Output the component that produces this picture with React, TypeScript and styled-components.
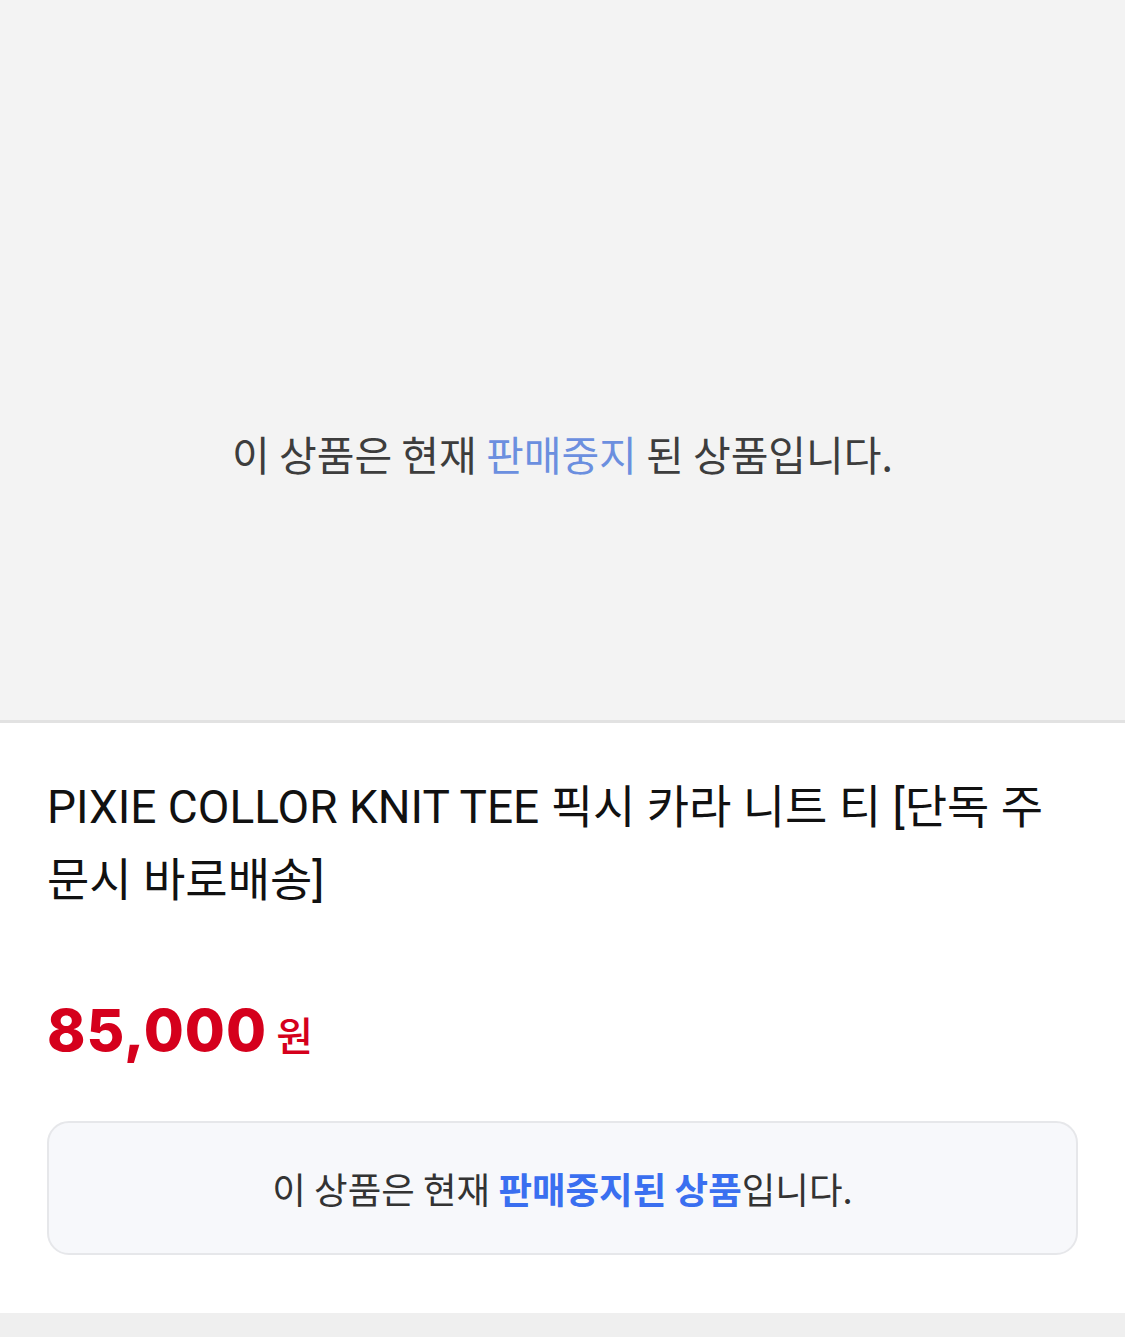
import React from "react";
import styled, { createGlobalStyle } from "styled-components";

const GlobalStyle = createGlobalStyle`
  html, body { margin: 0; padding: 0; background: #ffffff; }
  body { font-family: Roboto, "Noto Sans CJK KR", sans-serif; }
  * { box-sizing: border-box; }
`;

const Page = styled.div`
  width: 1125px;
  min-height: 1337px;
  display: flex;
  flex-direction: column;
  background: #ffffff;
`;

const ImageArea = styled.div`
  height: 723px;
  background: #f3f3f3;
  border-bottom: 3px solid #e2e2e2;
  display: flex;
  align-items: center;
  justify-content: center;
  padding-top: 186px;
`;

const StopNotice = styled.p`
  margin: 0;
  font-family: "Noto Sans CJK KR", sans-serif;
  font-size: 41px;
  font-weight: 400;
  color: #3d3d3d;
`;

const Highlight = styled.span<{ $bold?: boolean; $color: string }>`
  color: ${(p) => p.$color};
  font-weight: ${(p) => (p.$bold ? 700 : 400)};
`;

const Info = styled.div`
  padding: 48px 47px 0 47px;
  display: flex;
  flex-direction: column;
  flex: 1;
`;

const Title = styled.h1`
  margin: 0;
  font-family: Roboto, "Noto Sans CJK KR", sans-serif;
  font-size: 46px;
  font-weight: 400;
  line-height: 73px;
  color: #111111;
`;

const PriceRow = styled.div`
  margin-top: 84px;
  display: flex;
  align-items: baseline;
  gap: 9px;
  color: #d5001c;
`;

const Price = styled.span`
  font-family: Inter, Roboto, sans-serif;
  font-size: 58px;
  font-weight: 800;
  letter-spacing: 1px;
  line-height: 1;
`;

const Won = styled.span`
  font-family: "Noto Sans CJK KR", sans-serif;
  font-size: 40px;
  font-weight: 500;
`;

const NoticeBox = styled.div`
  margin-top: 58px;
  height: 134px;
  border: 2px solid #e6e7ea;
  border-radius: 22px;
  background: #f7f8fb;
  display: flex;
  align-items: center;
  justify-content: center;
`;

const BoxText = styled.p`
  margin: 0;
  font-family: "Noto Sans CJK KR", sans-serif;
  font-size: 36.5px;
  font-weight: 400;
  color: #333333;
`;

const Footer = styled.div`
  margin-top: 56px;
  height: 24px;
  background: #efefef;
`;

export default function App() {
  return (
    <>
      <GlobalStyle />
      <Page>
        <ImageArea>
          <StopNotice>
            이 상품은 현재 <Highlight $color="#6b8fdf">판매중지</Highlight> 된 상품입니다.
          </StopNotice>
        </ImageArea>
        <Info>
          <Title>PIXIE COLLOR KNIT TEE 픽시 카라 니트 티 [단독 주문시 바로배송]</Title>
          <PriceRow>
            <Price>85,000</Price>
            <Won>원</Won>
          </PriceRow>
          <NoticeBox>
            <BoxText>
              이 상품은 현재 <Highlight $bold $color="#3a6ff0">판매중지된 상품</Highlight>입니다.
            </BoxText>
          </NoticeBox>
        </Info>
        <Footer />
      </Page>
    </>
  );
}
